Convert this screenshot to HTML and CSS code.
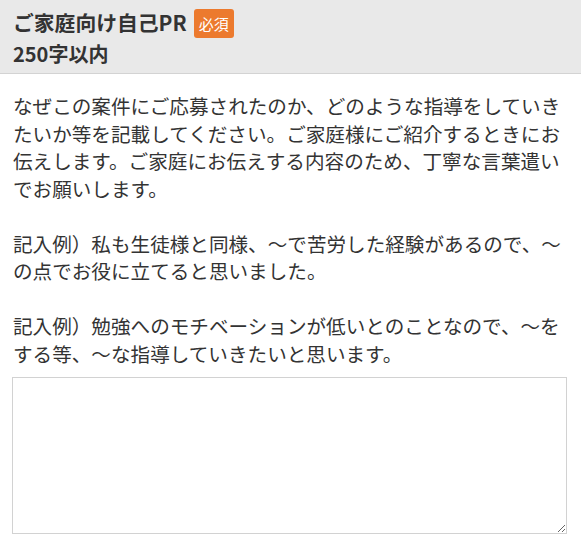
FILE: index.html
```html
<!DOCTYPE html>
<html lang="ja">
<head>
<meta charset="utf-8">
<link rel="stylesheet" href="styles.css">
</head>
<body>
<div class="header">
  <div class="title-row">
    <span class="title">ご家庭向け自己PR</span>
    <span class="badge">必須</span>
  </div>
  <div class="limit">250字以内</div>
</div>
<div class="content">
  <p class="desc">なぜこの案件にご応募されたのか、どのような指導をしていきたいか等を記載してください。ご家庭様にご紹介するときにお伝えします。ご家庭にお伝えする内容のため、丁寧な言葉遣いでお願いします。<br><br>記入例）私も生徒様と同様、〜で苦労した経験があるので、〜の点でお役に立てると思いました。<br><br>記入例）勉強へのモチベーションが低いとのことなので、〜をする等、〜な指導していきたいと思います。</p>
  <textarea class="input"></textarea>
</div>
</body>
</html>
```
FILE: styles.css
```css
html, body {
  margin: 0;
  padding: 0;
  background: #ffffff;
}
body {
  font-family: "Noto Sans CJK JP", "Noto Sans", sans-serif;
  color: #333333;
}
.header {
  background: #e9e9e9;
  border-bottom: 1px solid #d3d3d3;
  padding: 6px 13px 3px;
}
.title-row {
  display: flex;
  align-items: center;
  height: 32px;
  gap: 7px;
}
.title {
  font-size: 20.8px;
  font-weight: 700;
  line-height: 32px;
}
.badge {
  background: #ec7a2e;
  color: #ffffff;
  font-size: 15px;
  line-height: 29px;
  height: 29px;
  padding: 0 5px;
  border-radius: 3px;
  margin-top: 3px;
}
.limit {
  font-size: 20px;
  font-weight: 700;
  line-height: 32px;
}
.content {
  padding: 18px 12px 0;
}
.desc {
  margin: 0;
  padding-left: 1px;
  font-size: 19.6px;
  line-height: 27.5px;
}
.input {
  display: block;
  box-sizing: border-box;
  width: 555px;
  height: 157px;
  margin: 10px 0 0;
  border: 1px solid #d2d2d2;
  background: #ffffff;
  font-family: inherit;
}
```
